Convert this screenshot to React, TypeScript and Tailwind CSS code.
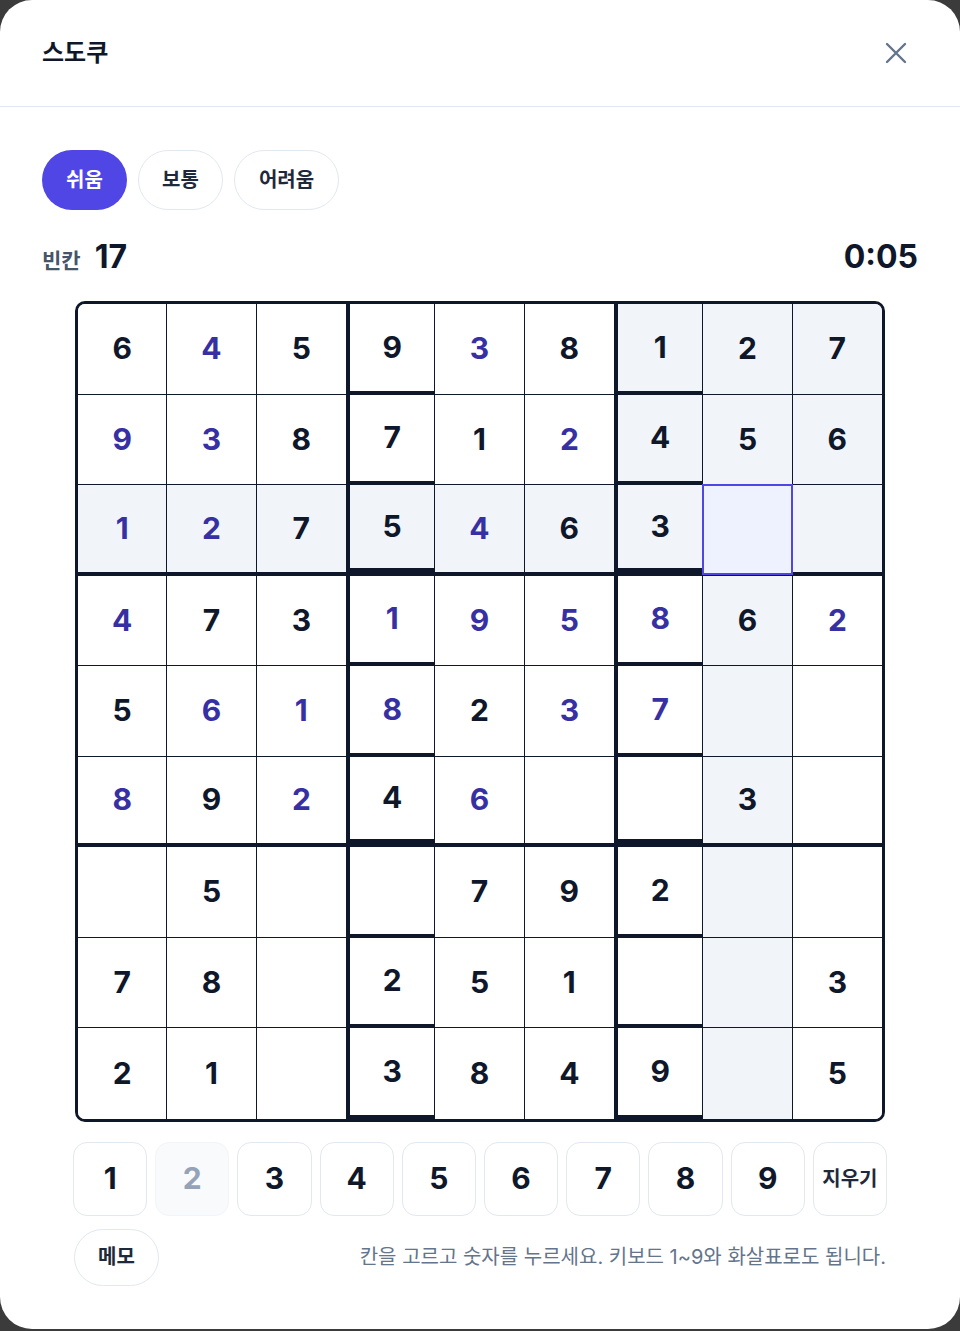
import { clsx } from "clsx";

type Cell = { v: number; given: boolean } | null;

const RAW = [
  "6g 4u 5g 9g 3u 8g 1g 2g 7g",
  "9u 3u 8g 7g 1g 2u 4g 5g 6g",
  "1u 2u 7g 5g 4u 6g 3g __ __",
  "4u 7g 3g 1u 9u 5u 8u 6g 2u",
  "5g 6u 1u 8u 2g 3u 7u __ __",
  "8u 9g 2u 4g 6u __ __ 3g __",
  "__ 5g __ __ 7g 9g 2g __ __",
  "7g 8g __ 2g 5g 1g __ __ 3g",
  "2g 1g __ 3g 8g 4g 9g __ 5g",
];

const board: Cell[][] = RAW.map((row) =>
  row.split(" ").map((t) => (t === "__" ? null : { v: Number(t[0]), given: t[1] === "g" }))
);

const SEL_R = 2;
const SEL_C = 7;

function isPeer(r: number, c: number) {
  if (r === SEL_R || c === SEL_C) return true;
  return Math.floor(r / 3) === Math.floor(SEL_R / 3) && Math.floor(c / 3) === Math.floor(SEL_C / 3);
}

function Board() {
  return (
    <div className="mx-auto w-[810px] grid grid-cols-9 border-[3px] border-[#0f172a] rounded-[10px] overflow-hidden bg-white">
      {board.map((row, r) =>
        row.map((cell, c) => {
          const boxCol = c === 3 || c === 6;
          const boxRow = r === 2 || r === 5;
          const lastRow = r === 8;
          const selected = r === SEL_R && c === SEL_C;
          return (
            <div
              key={`${r}-${c}`}
              className={clsx(
                "relative h-[90.5px] flex items-center justify-center border-[#0f172a] text-[30px] font-bold",
                c !== 8 && c !== 2 && c !== 5 && "border-r",
                boxCol && "border-l-[4px]",
                boxRow && boxCol && "border-b-[8px]",
                boxRow && !boxCol && "border-b-[4px]",
                !boxRow && boxCol && "border-b-[4px]",
                !boxRow && !boxCol && !lastRow && "border-b",
                isPeer(r, c) ? "bg-[#f1f5f9]" : "bg-white",
                cell?.given ? "text-[#0f172a]" : "text-[#3730a3]"
              )}
            >
              {selected && (
                <div className="absolute -top-px -left-px -right-px -bottom-[3px] border-2 border-[#4f46e5] bg-[#eef2ff]" />
              )}
              {cell && <span className="relative">{cell.v}</span>}
            </div>
          );
        })
      )}
    </div>
  );
}

function NumberPad() {
  return (
    <div className="mx-auto w-[814px] grid grid-cols-10 gap-2">
      {[1, 2, 3, 4, 5, 6, 7, 8, 9].map((n) => (
        <button
          key={n}
          className={clsx(
            "h-[74px] rounded-[14px] border text-[30px] font-bold",
            n === 2
              ? "bg-[#f8fafc] border-[#f1f5f9] text-[#94a3b8]"
              : "bg-white border-[#e2e8f0] text-[#0f172a]"
          )}
        >
          {n}
        </button>
      ))}
      <button className="h-[74px] rounded-[14px] border border-[#e2e8f0] bg-white text-[20px] font-bold text-[#1e293b]">
        지우기
      </button>
    </div>
  );
}

export default function App() {
  return (
    <div
      className="h-[1331px] bg-[#3b3b3b]"
      style={{ fontFamily: '"Inter", "Noto Sans CJK KR", sans-serif' }}
    >
      <div className="h-[1329px] bg-white rounded-[32px] flex flex-col">
        <div className="h-[107px] flex items-center justify-between px-[42px] border-b border-[#e2e8f0]">
          <h1 className="text-[24px] font-bold text-[#0f172a]">스도쿠</h1>
          <button className="w-[28px] h-[28px] flex items-center justify-center text-[#64748b] mr-[8px]">
            <svg width="22" height="22" viewBox="0 0 22 22" fill="none" stroke="currentColor" strokeWidth="2.4" strokeLinecap="round">
              <path d="M2 2 20 20M20 2 2 20" />
            </svg>
          </button>
        </div>

        <div className="px-[42px] pt-[43px]">
          <div className="flex gap-[11px]">
            <button className="h-[60px] w-[85px] rounded-full bg-[#4f46e5] text-white text-[20px] font-bold">쉬움</button>
            <button className="h-[60px] w-[85px] rounded-full border border-[#e2e8f0] text-[#1e293b] text-[20px] font-bold">보통</button>
            <button className="h-[60px] w-[105px] rounded-full border border-[#e2e8f0] text-[#1e293b] text-[20px] font-bold">어려움</button>
          </div>

          <div className="mt-[23px] flex items-baseline justify-between">
            <div className="flex items-baseline gap-[14px]">
              <span className="text-[21px] font-bold text-[#475569]">빈칸</span>
              <span className="text-[32px] font-bold text-[#0f172a]">17</span>
            </div>
            <span className="text-[32px] font-bold text-[#0f172a]">0:05</span>
          </div>

          <div className="mt-[20px]">
            <Board />
          </div>

          <div className="mt-[20px]">
            <NumberPad />
          </div>

          <div className="mx-auto w-[812px] mt-[13px] flex items-center justify-between">
            <button className="h-[57px] px-[23px] rounded-full border border-[#e2e8f0] text-[20px] font-bold text-[#1e293b]">
              메모
            </button>
            <p className="text-[20px] text-[#64748b]">
              칸을 고르고 숫자를 누르세요. 키보드 1~9와 화살표로도 됩니다.
            </p>
          </div>
        </div>
      </div>
    </div>
  );
}
